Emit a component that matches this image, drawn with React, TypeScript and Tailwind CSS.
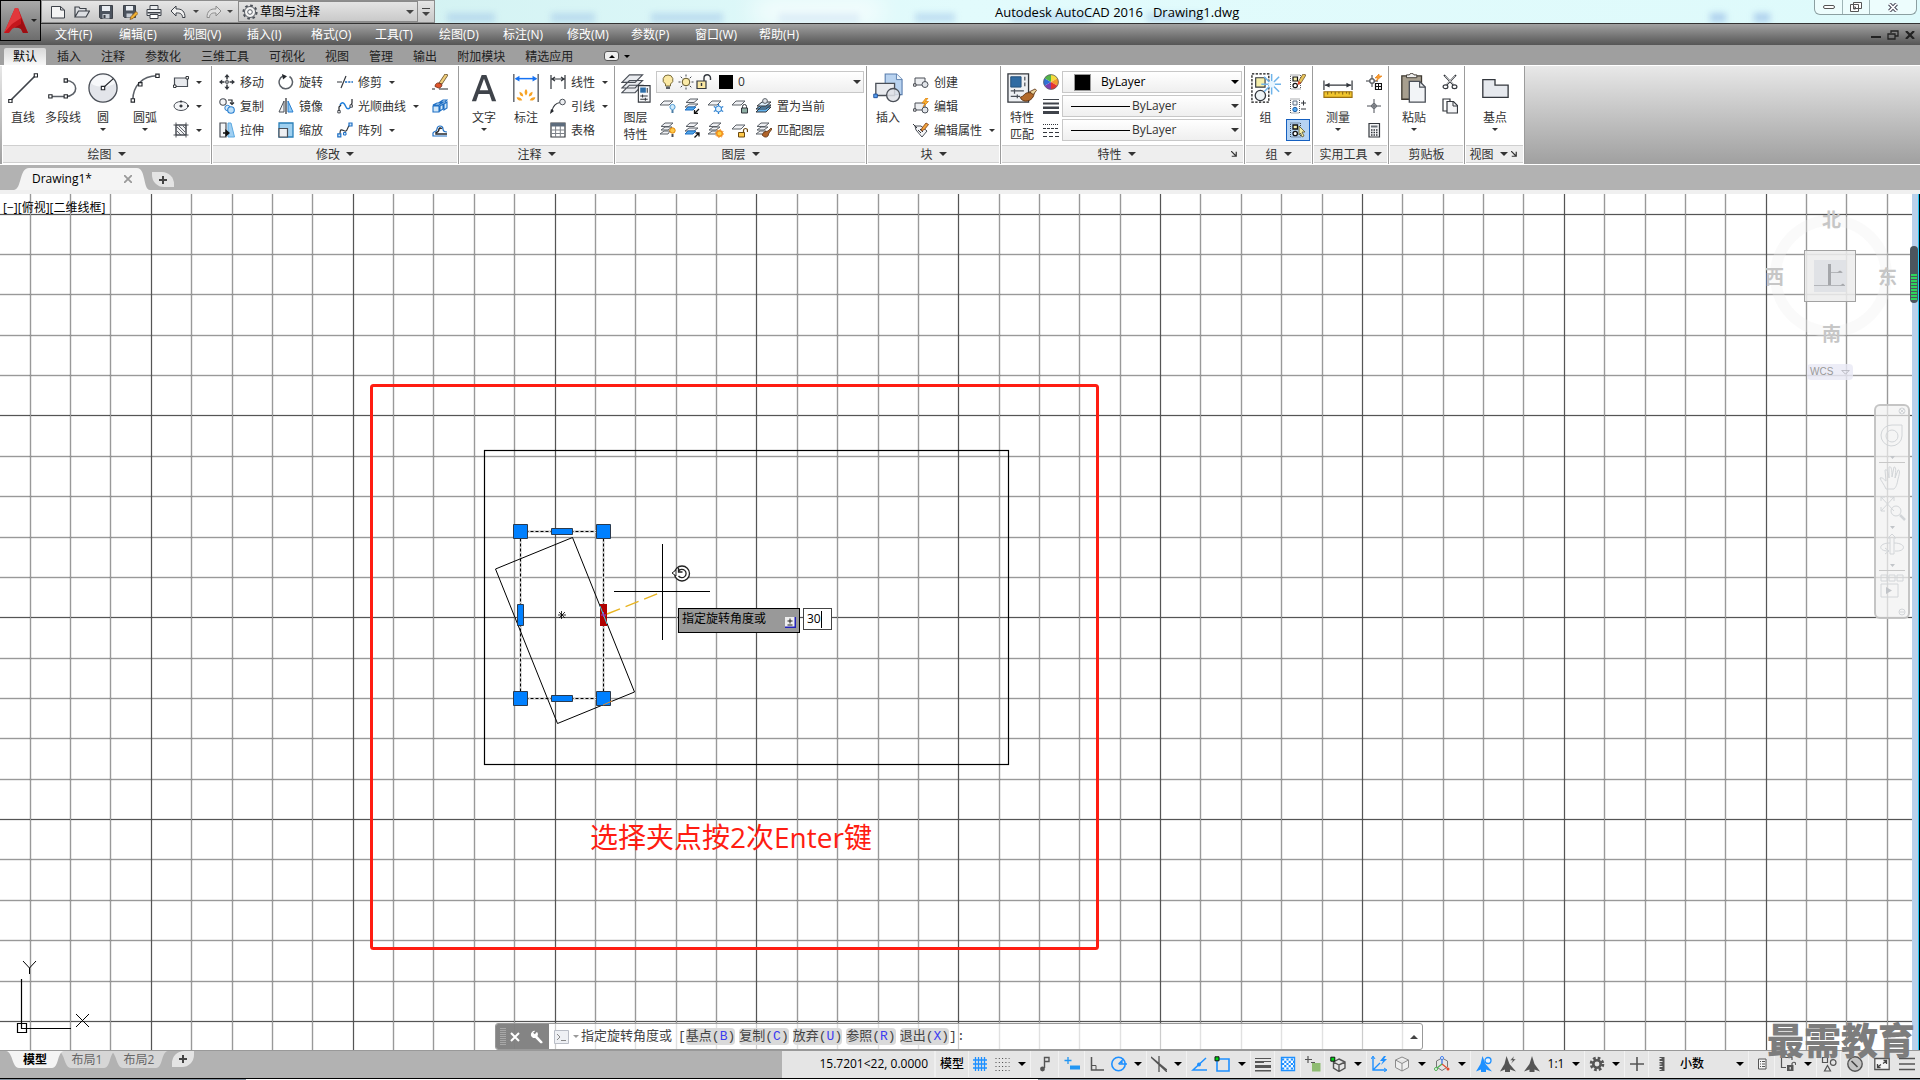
import type { ReactNode } from 'react';
import { clsx } from 'clsx';

const ICONS: Record<string, ReactNode> = {
  // quick access
  newFile: <path d="M1.5 2.5h9l4 3.5v8h-13zM10.5 2.5v3.5h4" fill="#f4f4f4" stroke="#3c4148" />,
  open: <path d="M1 13V3h4l1 1.5h6V7M1 13l3.5-6h11L12 13z" fill="#dcdee2" stroke="#3c4148" strokeWidth="1.2" />,
  save: (
    <>
      <path d="M1.5 1.5h13v13h-12l-1-1z" fill="#4b535e" stroke="#3c4148" />
      <path d="M4 2h8v5H4z" fill="#e9edf2" />
      <path d="M4.5 10h7v4.5h-7z" fill="#c6ccd4" />
      <path d="M5.5 11h2v3h-2z" fill="#3c4148" />
    </>
  ),
  saveAs: (
    <>
      <path d="M1.5 1.5h12v12h-11l-1-1z" fill="#4b535e" stroke="#3c4148" />
      <path d="M4 2h7v4.5H4z" fill="#e9edf2" />
      <path d="M4.5 9.5h6v4h-6z" fill="#c6ccd4" />
      <path d="M8 15.5l1-3 5-5 2 2-5 5z" fill="#f2b233" stroke="#7a4a12" strokeWidth=".7" />
    </>
  ),
  print: (
    <>
      <path d="M4 5V1.5h8V5M1 5.5h14v6H1z" fill="#eceef0" stroke="#3c4148" />
      <path d="M1.5 8h13v1.5h-13z" fill="#3c4148" />
      <path d="M4 10.5h8v4H4z" fill="#fff" stroke="#3c4148" />
    </>
  ),
  undo: <path d="M1 7l5-5v3c6-.5 9 2.5 9 8.5h-2.500C12.5 10 10 8.5 6 9v3z" fill="#f0f0f0" stroke="#3c4148" strokeLinejoin="round" />,
  redo: <path d="M15 7l-5-5v3c-6-.5-9 2.5-9 8.5h2.500C3.5 10 6 8.5 10 9v3z" fill="#e0e0e0" stroke="#8d8d8d" strokeLinejoin="round" />,
  gearOutline: (
    <>
      <circle cx="8" cy="8" r="6.6" fill="none" stroke="#4a4f57" strokeWidth="2" strokeDasharray="2.6 2.58" />
      <circle cx="8" cy="8" r="5.5" fill="#f2f2f2" stroke="#4a4f57" strokeWidth=".9" />
      <circle cx="8" cy="8" r="2.3" fill="#fff" stroke="#4a4f57" strokeWidth=".9" />
    </>
  ),
  // draw
  line: (
    <>
      <path d="M2 30L30 2" stroke="#3f434a" strokeWidth="1.6" />
      <path d="M.8 28.2h3.5v3.5H.8zM28 .8h3.5v3.5H28z" fill="#fff" stroke="#23262b" strokeWidth="1.2" />
    </>
  ),
  polyline: (
    <>
      <path d="M2 25h17c14 0 14-17 0-17" fill="none" stroke="#5c6168" strokeWidth="1.7" />
      <path d="M.8 23.2h3.5v3.5H.8zM17.2 23.2h3.5v3.5h-3.5zM17.2 6.2h3.5v3.5h-3.5z" fill="#fff" stroke="#23262b" strokeWidth="1.2" />
    </>
  ),
  circle: (
    <>
      <circle cx="16" cy="16" r="15" fill="#e3e5ea" stroke="#4a4f57" strokeWidth="1.4" />
      <path d="M3 11a14 14 0 0 1 26 0c-6 4-18 6-26 0z" fill="#f7f8fa" />
      <path d="M16 16L27 6" stroke="#23262b" strokeWidth="1.2" />
      <path d="M14.2 14.2h3.6v3.6h-3.6z" fill="#fff" stroke="#23262b" strokeWidth="1.2" />
    </>
  ),
  arc: (
    <>
      <path d="M3 29C3 14 13 3 29 3" fill="none" stroke="#5c6168" strokeWidth="1.7" />
      <path d="M1.2 27.5h3.6v3.6H1.200zM9.2 10.2h3.6v3.6H9.200zM27.5 1.2h3.6v3.6h-3.6z" fill="#fff" stroke="#23262b" strokeWidth="1.2" />
    </>
  ),
  rect: (
    <>
      <path d="M1.5 4h13v8.5h-13z" fill="#e8eaee" stroke="#4a4f57" strokeWidth="1.2" />
      <path d="M13 2.5h2.5V5H13zM.5 11H3v2.5H.5z" fill="#fff" stroke="#23262b" strokeWidth=".9" />
    </>
  ),
  ellipse: (
    <>
      <ellipse cx="8" cy="8" rx="7" ry="4.5" fill="#f4f5f7" stroke="#4a4f57" />
      <path d="M6.5 8h3M8 6.5v3M8 2.5v2M14 8h2" stroke="#23262b" strokeWidth="1.3" />
    </>
  ),
  hatch: (
    <>
      <path d="M3 3h10v10H3z" fill="#f0f1f3" stroke="#4a4f57" />
      <path d="M4 9l4 4M4 5l8 8M6 4l6 6M10 4l3 3" stroke="#55595f" strokeWidth=".9" />
      <path d="M3 .5v15M.5 13h15M.5 3h15M13 .5v15" stroke="#3f434a" strokeWidth=".9" />
    </>
  ),
  // modify
  move: (
    <>
      <path d="M8 0l2.6 3.2H5.4zM8 16l2.6-3.2H5.4zM0 8l3.2-2.6v5.2zM16 8l-3.2-2.6v5.2z" fill="#33373d" />
      <path d="M8 3v2.5M8 13v-2.5M3 8h2.5M13 8h-2.5" stroke="#33373d" strokeWidth="1.5" />
      <path d="M6.8 6.8h2.4v2.4H6.8z" fill="none" stroke="#33373d" />
    </>
  ),
  rotate: (
    <>
      <path d="M11.5 2.5A6.7 6.7 0 1 1 5 2" fill="none" stroke="#5b6067" strokeWidth="1.5" />
      <path d="M4 0l5 2.2L5 5.5z" fill="#23262b" />
    </>
  ),
  trim: (
    <>
      <path d="M0 8h5M9 2L4 14" stroke="#33373d" strokeWidth="1.2" />
      <path d="M8 8h8" stroke="#1e6fc4" strokeWidth="1.4" strokeDasharray="2.2 1" />
    </>
  ),
  erase: (
    <>
      <path d="M7 9L13 0l3 1-6 9z" fill="#f1cf7b" stroke="#5d4522" strokeWidth=".8" />
      <path d="M3 12.5C3 10 5 8.5 7 9l3 1.5c0 2-1.5 3.5-3.5 3.5z" fill="#e0562c" stroke="#6e2a15" strokeWidth=".8" />
      <path d="M0 15h3M7 15h9" stroke="#23262b" strokeWidth="1.2" />
    </>
  ),
  copy: (
    <>
      <circle cx="4" cy="4" r="3.2" fill="#f4f5f7" stroke="#4a4f57" strokeWidth="1.1" />
      <path d="M9 2h4v3M11 4.500l2 2 2-2" fill="none" stroke="#23262b" strokeWidth="1.2" />
      <circle cx="8.5" cy="10" r="2.7" fill="#d9ecfb" stroke="#2a7fd0" />
      <circle cx="12" cy="12" r="3.3" fill="#bfe0f8" stroke="#2a7fd0" strokeWidth="1.1" />
    </>
  ),
  mirror: (
    <>
      <path d="M6 3v11H1z" fill="#f4f5f7" stroke="#4a4f57" />
      <path d="M10 3v11h5z" fill="#8fcaf5" stroke="#2a7fd0" />
      <path d="M8 0v16" stroke="#23262b" strokeWidth="1.2" />
    </>
  ),
  blend: (
    <>
      <path d="M2 14V9l2-2M14 8l1-3V1" fill="none" stroke="#23262b" strokeWidth="1.2" />
      <path d="M3 7c3-5 5 0 6 2s3 3 5-1" fill="none" stroke="#1e7fdc" strokeWidth="1.5" />
      <path d="M.8 12.5h2.4v2.4H.8zM13 6.8h2.4v2.4H13z" fill="#fff" stroke="#33373d" strokeWidth=".9" />
    </>
  ),
  explode: (
    <path d="M1 7l4-2h5l-3 2zM1 8h6v6H1zM8 8l3-2v5l-3 2zM8 4l3-2h4l-2 2zM12 6l3-2v6l-3 2z" fill="#cfe6f9" stroke="#1e6fc4" strokeWidth="1.1" />
  ),
  stretch: (
    <>
      <path d="M1 1h6v14H1z" fill="#f4f5f7" stroke="#4a4f57" strokeWidth="1.2" />
      <path d="M9 1h3l3.5 14H9z" fill="#9fcff2" stroke="#5ba8e0" />
      <path d="M4 11h5M7 8.5l3 2.5-3 2.5z" stroke="#111" strokeWidth="1.3" fill="#111" />
    </>
  ),
  scale: (
    <>
      <path d="M1 1h14v14H1z" fill="#9fd0f0" stroke="#2a7fb8" strokeWidth="1.3" />
      <path d="M1 6.5h8.5V15H1z" fill="#eef0f3" stroke="#4a4f57" strokeWidth="1.2" />
    </>
  ),
  array: (
    <>
      <path d="M3 12c0-8 4-2 6-3s1-4 4-6" fill="none" stroke="#33373d" strokeWidth="1.2" />
      <path d="M.8 11.8h3v3h-3zM12 1h3v3h-3z" fill="#cfe6f9" stroke="#1e6fc4" strokeWidth="1.2" />
      <path d="M6.5 10.5H9V13H6.5z" fill="#cfe6f9" stroke="#1e6fc4" />
    </>
  ),
  offset: (
    <>
      <path d="M15 14H1v-3c1-2 4-1 4-4a3 3 0 0 1 6 0c0 2 1 3 4 3" fill="none" stroke="#1e6fc4" strokeWidth="1.2" />
      <path d="M15 12H4v-1.5c3-.5 3-2 3-3.5a1.3 1.3 0 0 1 2.5 0" fill="none" stroke="#23262b" strokeWidth="1.4" />
    </>
  ),
  // annotate
  textA: <path d="M3 30L13.5 2h5L29 30h-4.6l-2.600-7.5H10.2L7.6 30zM11.5 18.5h9L16 6z" fill="#3f434a" fillRule="evenodd" />,
  dimension: (
    <>
      <path d="M3 1v30M29 1v30" stroke="#5c6168" strokeWidth="1.5" />
      <path d="M5 6h22" stroke="#1672f3" strokeWidth="1.6" />
      <path d="M4 6l5-3v6zM28 6l-5-3v6z" fill="#1672f3" />
      <path d="M16 17c2 2 2 5 0 7-2-2-2-5 0-7zM9 20c3 1 4 2 4 5-3 0-4-2-4-5zM23 20c-3 1-4 2-4 5 3 0 4-2 4-5zM6 26c3-.5 5 1 6 3-3 1-5 0-6-3zM26 26c-3-.5-5 1-6 3 3 1 5 0 6-3z" fill="#f7a325" />
    </>
  ),
  linear: <path d="M1 1v14M15 1v14M2 5h12M5 3L2 5l3 2M11 3l3 2-3 2" fill="none" stroke="#33373d" strokeWidth="1.2" />,
  leader: (
    <>
      <path d="M2 13C3 8 6 5 10 4.5" fill="none" stroke="#33373d" strokeWidth="1.2" />
      <circle cx="12.5" cy="4" r="2.8" fill="#eceef1" stroke="#4a4f57" />
      <path d="M0 16l1-5 3 2z" fill="#23262b" />
    </>
  ),
  table: (
    <>
      <path d="M1 1h14v14H1z" fill="#fff" stroke="#33373d" strokeWidth="1.2" />
      <path d="M1 1h14v3.5H1z" fill="#5c6b7c" />
      <path d="M1 8h14M1 11.5h14M5.6 4v11M10.3 4v11" stroke="#7c8188" />
    </>
  ),
  // layers
  layerProps: (
    <>
      <path d="M1 21l8-8h14l-8 8zM1 16l8-8h14l-8 8zM1 10l8-8h14l-8 8z" fill="#e9ebef" stroke="#4a4f57" strokeWidth="1.2" />
      <path d="M18.5 13.5h12.500v17.500H18.5z" fill="#f7f8fa" stroke="#33373d" strokeWidth="1.2" />
      <path d="M20.5 15.5h6v5.5h-6z" fill="#2d6ea8" />
      <path d="M28 16v5M20.5 24.5h8M20.5 28h8M23 23v3M26 26.5v3" stroke="#33373d" strokeWidth="1.1" />
    </>
  ),
  bulb: (
    <>
      <path d="M8 1a4.8 4.8 0 0 1 2.5 9v2h-5v-2A4.8 4.8 0 0 1 8 1z" fill="#fbe9a4" stroke="#6b5c2a" strokeWidth=".9" />
      <path d="M6 12.5h4V15H6z" fill="#5b6067" />
    </>
  ),
  sun: (
    <>
      <circle cx="8" cy="8" r="3.8" fill="#fbeba8" stroke="#5f5326" />
      <path d="M8 .5v2M8 13.5v2M.5 8h2M13.5 8h2M2.7 2.7l1.5 1.5M11.8 11.8l1.5 1.5M13.3 2.7l-1.5 1.5M4.2 11.8l-1.5 1.5" stroke="#3f434a" />
    </>
  ),
  unlock: (
    <>
      <path d="M1 7h9v7.5H1z" fill="#fbe9a4" stroke="#33373d" strokeWidth="1.2" />
      <path d="M8 7V4a3 3 0 0 1 6.5 0v2" fill="none" stroke="#33373d" strokeWidth="1.4" />
      <path d="M5.5 9v3" stroke="#33373d" strokeWidth="1.4" />
    </>
  ),
  layerOff: (
    <>
      <path d="M0 7l4-4h9L9 7z" fill="#f0f1f4" stroke="#5b6067" />
      <circle cx="12.5" cy="9" r="2.6" fill="#cfe9fb" stroke="#4f9bd3" />
      <path d="M11.5 12h2v3h-2z" fill="#4d7ea6" />
    </>
  ),
  layerIso: (
    <>
      <path d="M1 9l4-3h9l-4 3zM2 4.5L6 1h8l-4 3.5z" fill="#f0f1f4" stroke="#5b6067" />
      <path d="M1 12l3-3h8l-3 3z" fill="#4fa6e8" stroke="#1e6fc4" />
      <path d="M15 11l-4 4M10.5 12v3.5H14" stroke="#111" strokeWidth="1.3" fill="none" />
    </>
  ),
  layerFreeze: (
    <>
      <path d="M0 7l4-4h9L9 7z" fill="#f0f1f4" stroke="#5b6067" />
      <path d="M10.5 6v10M5.8 8.5l9.4 5M15.2 8.5l-9.4 5" stroke="#2a7fd0" strokeWidth="1.3" />
      <circle cx="10.5" cy="11" r="3" fill="#e2f2fd" stroke="#2a7fd0" />
    </>
  ),
  layerLock: (
    <>
      <path d="M0 7l4-4h9L9 7z" fill="#f0f1f4" stroke="#5b6067" />
      <path d="M9.5 10h6v5h-6z" fill="#8fb0a5" stroke="#33373d" />
      <path d="M10.5 10V8.5a2 2 0 0 1 4 0V10" fill="none" stroke="#33373d" />
    </>
  ),
  layerCurrent: (
    <>
      <path d="M0 14l5-5h10l-5 5zM0 11l5-4h10l-5 4z" fill="#65b4ee" stroke="#33373d" />
      <path d="M1 8l5-4h9l-5 4z" fill="#dceefb" stroke="#33373d" />
      <circle cx="9" cy="3" r="2.4" fill="#dfe3e8" stroke="#5b6067" />
    </>
  ),
  layerOn: (
    <>
      <path d="M0 12l4-3h6l-2 3zM1 8l4-3h7L8 8zM1 4.5L5 1h8L9 4.5z" fill="#f0f1f4" stroke="#5b6067" />
      <circle cx="12.5" cy="8.5" r="2.7" fill="#ffc94a" stroke="#e2880b" />
      <path d="M11.5 12h2v3h-2z" fill="#4a4f57" />
    </>
  ),
  layerUniso: (
    <>
      <path d="M1 9l4-3h9l-4 3zM2 4.5L6 1h8l-4 3.5z" fill="#f0f1f4" stroke="#5b6067" />
      <path d="M1 12l3-3h8l-3 3z" fill="#4fa6e8" stroke="#1e6fc4" />
      <path d="M10.5 15.5l4-4M11.5 11H15v3.5" stroke="#111" strokeWidth="1.3" fill="none" />
    </>
  ),
  layerThaw: (
    <>
      <path d="M0 12l4-3h6l-2 3zM1 8l4-3h7L8 8zM1 4.5L5 1h8L9 4.5z" fill="#f0f1f4" stroke="#5b6067" />
      <circle cx="11.5" cy="11.5" r="2.8" fill="#ffcf3d" stroke="#f08b1a" strokeWidth="1.4" />
      <circle cx="11.5" cy="11.5" r="4" fill="none" stroke="#f08b1a" strokeDasharray="1.2 1.9" />
    </>
  ),
  layerUnlock: (
    <>
      <path d="M0 7l4-4h9L9 7z" fill="#f0f1f4" stroke="#5b6067" />
      <path d="M6.5 10.5h6V15h-6z" fill="#ffc94a" stroke="#6b4a12" />
      <path d="M11.5 10.5V8.5a2 2 0 0 1 4 0V10" fill="none" stroke="#6b4a12" strokeWidth="1.2" />
    </>
  ),
  layerMatch: (
    <>
      <path d="M0 12l4-3h6l-2 3zM1 8l4-3h7L8 8zM1 4.5L5 1h8L9 4.5z" fill="#f0f1f4" stroke="#5b6067" />
      <path d="M8 10l4-1 3-3 1 1-3 4-1 3c-2 2-4 1-6-1z" fill="#b0642a" stroke="#5c3212" strokeWidth=".8" />
    </>
  ),
  // block
  insert: (
    <>
      <path d="M13 1h12l6 6v16H13z" fill="#b9d3f0" stroke="#5b7fae" strokeWidth="1.2" />
      <path d="M25 1v6h6" fill="#eef5fc" stroke="#5b7fae" />
      <path d="M3 11h20v13H3z" fill="#e9ebef" stroke="#4a4f57" strokeWidth="1.4" />
      <circle cx="21.5" cy="23.5" r="7" fill="#dfe2e7" fillOpacity=".85" stroke="#4a4f57" strokeWidth="1.4" />
      <path d="M.8 22.5h3.8v3.8H.8z" fill="#5aa0ee" stroke="#1d4f9c" />
    </>
  ),
  blockCreate: (
    <>
      <path d="M2 4h10v7H2z" fill="#eceef1" stroke="#4a4f57" />
      <circle cx="12" cy="10.5" r="3" fill="#e2e5ea" stroke="#4a4f57" />
      <path d="M.6 9.8h2.4v2.4H.6z" fill="#fff" stroke="#33373d" strokeWidth=".9" />
    </>
  ),
  blockEdit: (
    <>
      <path d="M2 5h10v7H2z" fill="#eceef1" stroke="#4a4f57" />
      <circle cx="12" cy="12" r="3" fill="#e2e5ea" stroke="#4a4f57" />
      <path d="M.6 10.8h2.4v2.4H.6z" fill="#fff" stroke="#33373d" strokeWidth=".9" />
      <path d="M13 0L9 5h3l-2 4 5.5-5.5h-3L15 0z" fill="#ffb52e" stroke="#d67a0a" strokeWidth=".7" />
    </>
  ),
  blockAttr: (
    <>
      <path d="M2 4h6l6 5-5 6-6-7z" fill="#f4f5f7" stroke="#4a4f57" />
      <path d="M0 2l4 4M5 8l3 3M7 7l3 3" stroke="#33373d" />
      <path d="M8 9l1-3 4-5 2.5 1.5-4 5z" fill="#f2a33c" stroke="#7a3812" strokeWidth=".8" />
    </>
  ),
  // properties
  matchProps: (
    <>
      <path d="M1 1h22v30H1z" fill="#eef0f3" stroke="#33373d" strokeWidth="1.4" />
      <path d="M4 4h11v11H4z" fill="#2f6ba3" stroke="#234f78" />
      <path d="M19 4v4M19 10v4M4 19h14M8 17v5M4 25h10M11 23v4" stroke="#4a4f57" strokeWidth="1.3" />
      <path d="M14 26c4-1 5-5 8-5l7 0c0 4-3 9-9 9-3 0-5-2-6-4z" fill="#b36a2b" stroke="#5c3212" />
      <path d="M24 20l6-3 1.5 1.5L28 23z" fill="#ead39b" stroke="#5c3212" strokeWidth=".9" />
    </>
  ),
  wheel: (
    <>
      <path d="M8 8V.5A7.5 7.5 0 0 1 14.5 4.2z" fill="#f6dc3c" />
      <path d="M8 8l6.5-3.8a7.5 7.5 0 0 1 0 7.6z" fill="#f39a2c" />
      <path d="M8 8l6.5 3.8A7.5 7.5 0 0 1 8 15.5z" fill="#e5342e" />
      <path d="M8 8v7.5a7.5 7.5 0 0 1-6.5-3.7z" fill="#7d3fb0" />
      <path d="M8 8l-6.5 3.8a7.5 7.5 0 0 1 0-7.6z" fill="#2f6fd6" />
      <path d="M8 8L1.5 4.2A7.5 7.5 0 0 1 8 .5z" fill="#53b548" />
      <circle cx="8" cy="8" r="7.4" fill="none" stroke="#5b6067" strokeWidth=".8" />
    </>
  ),
  lineweight: <path d="M0 1h16v1H0zM0 4.5h16v2H0zM0 8.5h16v2.5H0zM0 13h16v3H0z" fill="#3f434a" />,
  linetype: (
    <>
      <path d="M0 2.5h16" stroke="#33373d" strokeDasharray="1 1" />
      <path d="M0 6.5h16" stroke="#33373d" strokeDasharray="3 1" />
      <path d="M0 10.5h16M0 14.5h16" stroke="#33373d" strokeDasharray="4 2" />
    </>
  ),
  // groups
  group: (
    <>
      <path d="M1 1h18v30H1z" fill="none" stroke="#111" strokeWidth="1.3" strokeDasharray="2.5 1.5" />
      <path d="M5 5h10v10H5z" fill="#f5efab" stroke="#33373d" strokeWidth="1.2" />
      <circle cx="10" cy="24" r="5.5" fill="#eef3f5" stroke="#33373d" strokeWidth="1.4" />
      <path d="M22 1v22M11 12h21M14 4l16 16M30 4L14 20" stroke="#6fb4ea" strokeWidth="1.6" />
      <circle cx="22" cy="12" r="3.5" fill="#e6f5ff" />
    </>
  ),
  ungroup: (
    <>
      <path d="M.5 1h10v14H.5z" fill="none" stroke="#55595f" strokeDasharray="1 1" />
      <path d="M3 3h4.5v4H3z" fill="#f5efab" stroke="#111" strokeWidth="1.2" />
      <circle cx="5.2" cy="11.5" r="2.2" fill="#fff" stroke="#111" strokeWidth="1.2" />
      <path d="M8 8l5-8 3 1-5 8z" fill="#e8c45a" stroke="#5d4522" strokeWidth=".7" />
      <path d="M7.5 10l1-3 2.5 1.5L9 11z" fill="#d9472a" />
    </>
  ),
  groupEdit: (
    <>
      <path d="M.5 1h9v14h-9z" fill="none" stroke="#55595f" strokeDasharray="1 1" />
      <path d="M3 3h4v4H3z" fill="#f0f4f8" stroke="#5b6f85" />
      <circle cx="5" cy="11.5" r="2.2" fill="#4fa6f0" stroke="#1e5fa4" />
      <path d="M11 5h5M13.5 2.5v5M11 11h5" stroke="#33373d" />
    </>
  ),
  groupSelect: (
    <>
      <path d="M.5 1h10v14H.5z" fill="none" stroke="#3c4a5c" strokeDasharray="1 1" />
      <path d="M3 3h4.5v4H3z" fill="#f5efab" stroke="#111" strokeWidth="1.3" />
      <circle cx="5.2" cy="11.5" r="2.2" fill="#fff" stroke="#111" strokeWidth="1.3" />
      <path d="M9 4l6 6h-3l2 4-2 1-1.5-4L9 13z" fill="#f5efab" stroke="#5b5326" strokeWidth=".8" />
    </>
  ),
  // utilities
  measure: (
    <>
      <path d="M1 8v10M31 8v10M2 13h28" stroke="#33373d" strokeWidth="1.3" />
      <path d="M2 13l5-2.5v5zM30 13l-5-2.5v5z" fill="#33373d" />
      <path d="M1 20h30v6H1z" fill="#f0c52e" stroke="#9a6f10" strokeWidth="1.2" />
      <path d="M5 20v3M9 20v2M13 20v3M17 20v2M21 20v3M25 20v2M28 20v3" stroke="#7b5a10" />
    </>
  ),
  quickSelect: (
    <>
      <path d="M6 1v12M0 7h12" stroke="#33373d" />
      <path d="M4 5h4v4H4z" fill="#fff" stroke="#33373d" />
      <path d="M13 0L9 4h3l-2 3 6-5h-3z" fill="#ff9d2e" stroke="#e0780a" strokeWidth=".6" />
      <path d="M9.5 9.5h6v6h-6z" fill="#fff" stroke="#111" strokeWidth="1.2" />
      <path d="M9.5 12.5h6M12.5 9.5v6" stroke="#111" />
    </>
  ),
  idPoint: (
    <>
      <path d="M8 1v14M1 8h14" stroke="#4a4f57" />
      <circle cx="8" cy="8" r="2.3" fill="none" stroke="#4a4f57" />
    </>
  ),
  calc: (
    <>
      <path d="M3 1.5h10.5v13.5H3z" fill="#f4f5f7" stroke="#33373d" strokeWidth="1.2" />
      <path d="M5 3.5h6.5v2H5z" fill="#6b7077" />
      <path d="M5 8h7M5 10.5h7M5 13h7" stroke="#33373d" strokeWidth="1.3" strokeDasharray="1.5 1" />
    </>
  ),
  // clipboard
  paste: (
    <>
      <path d="M3 3h21v25H3z" fill="#a79f8f" stroke="#3f3a32" strokeWidth="1.4" />
      <path d="M8 5V2h3c0-2 5-2 5 0h3v3z" fill="#f0f0f0" stroke="#3f3a32" />
      <path d="M11 9h11l6 6v16H11z" fill="#f2f4f7" stroke="#4a4f57" strokeWidth="1.4" />
      <path d="M22 9v6h6" fill="none" stroke="#4a4f57" strokeWidth="1.2" />
    </>
  ),
  cut: (
    <>
      <path d="M2 1l9.500 10M14 1L4.500 11" stroke="#33373d" strokeWidth="1.8" />
      <path d="M3 2l9 9M13 2l-9 9" stroke="#e8e8e8" strokeWidth=".7" />
      <ellipse cx="3.5" cy="12.8" rx="2.4" ry="1.9" fill="#fff" stroke="#33373d" strokeWidth="1.2" />
      <ellipse cx="12.5" cy="12.8" rx="2.4" ry="1.9" fill="#fff" stroke="#33373d" strokeWidth="1.2" />
    </>
  ),
  copyClip: (
    <>
      <path d="M5 13H1V1h7v2" fill="none" stroke="#33373d" strokeWidth="1.2" />
      <path d="M5 3.5h6.5l4 4V15H5z" fill="#f4f5f7" stroke="#33373d" strokeWidth="1.2" />
      <path d="M11 4v4h4" fill="none" stroke="#33373d" />
    </>
  ),
  base: <path d="M3 7h13v6h14v13H3z" fill="#e6e9ee" stroke="#33373d" strokeWidth="1.4" />,
  // status bar
  grid: <path d="M3.5 1v14M6.500 1v14M9.5 1v14M12.5 1v14M1 4h14M1 8h14M1 12h14" stroke="#1e90ff" strokeWidth="1.3" />,
  snap: <path d="M1.5 2.5h14M1.5 6.5h14M1.5 10.5h14M1.5 14.5h14" stroke="#444" strokeWidth="1.2" strokeDasharray="1 2.3" />,
  infer: (
    <>
      <path d="M7.5 12V1.5H12v4H7.5" fill="none" stroke="#555" strokeWidth="1.4" />
      <circle cx="5.5" cy="13" r="2.4" fill="#555" />
    </>
  ),
  dynInput: (
    <>
      <path d="M4 1v7M.5 4.5h7" stroke="#2196f3" strokeWidth="1.3" />
      <path d="M6 9.5h10v4H6z" fill="#2196f3" />
    </>
  ),
  ortho: (
    <>
      <path d="M2.5 1v13H15" fill="none" stroke="#555" strokeWidth="1.5" />
      <path d="M2.5 9.5H7V14" fill="none" stroke="#555" />
    </>
  ),
  polar: (
    <>
      <circle cx="7.5" cy="8" r="6.7" fill="none" stroke="#1e90ff" strokeWidth="1.6" />
      <path d="M7.5 8l5-5M7.5 8H16M11 4.5V8" stroke="#1e90ff" strokeWidth="1.3" />
    </>
  ),
  iso: <path d="M8 0v16M0 1l16 13M0 1l16 15" stroke="#555" strokeWidth="1.3" />,
  otrack: (
    <>
      <path d="M15 2L2 14h14" fill="none" stroke="#1e90ff" strokeWidth="1.5" />
      <circle cx="8" cy="8.5" r="2" fill="#1e90ff" />
    </>
  ),
  osnap: (
    <>
      <path d="M3 3h12v12H3z" fill="none" stroke="#1e90ff" strokeWidth="1.6" />
      <path d="M1 .8h4v4H1z" fill="#00d414" stroke="#111" />
    </>
  ),
  lwt: <path d="M0 2h16v1H0zM0 5h9v2H0zM9 5h7v1H9zM0 9h16v3H0zM0 14h16v1.500H0z" fill="#555" />,
  transparency: (
    <>
      <path d="M1.5 1.5h13v13h-13z" fill="#fff" stroke="#1e90ff" strokeWidth="1.4" />
      <path d="M2 3.5h12M2 8h12M2 12.5h12" stroke="#1e90ff" strokeWidth="2.2" strokeDasharray="2.2 2.2" />
      <path d="M4.2 5.8h10M4.2 10.2h10" stroke="#1e90ff" strokeWidth="2.2" strokeDasharray="2.2 2.2" />
    </>
  ),
  cycling: (
    <>
      <path d="M3 0v7M0 3.5h7M6 6.5h4" stroke="#555" strokeWidth="1.2" />
      <path d="M7 7h8.5v8.5H7z" fill="#8fbc72" />
    </>
  ),
  osnap3d: (
    <>
      <path d="M9 3l6 3v6l-6 3.5L3.5 12V6zM3.5 6L9 9l6-3M9 9v6" fill="none" stroke="#555" strokeWidth="1.4" />
      <path d="M.8 1.2h4v4h-4z" fill="#00d414" stroke="#111" />
    </>
  ),
  ducs: (
    <>
      <path d="M2 1v13h13M2 14L9 7" fill="none" stroke="#1e90ff" strokeWidth="1.4" />
      <path d="M0 3l2-3 2 3M13 12l3 2-3 2" fill="none" stroke="#1e90ff" />
      <path d="M13 0l-4 5h3l-2 4 6-6h-3l2-3z" fill="#1e90ff" />
    </>
  ),
  cube: <path d="M8 1l6.5 3v7.5L8 15l-6.500-3.5V4zM1.5 4L8 7.5 14.5 4M8 7.5V15" fill="#eee" stroke="#8b8b8b" />,
  gizmo: (
    <>
      <path d="M8 2l5.5 3v6L8 14.5 2.5 11V5z" fill="none" stroke="#777" />
      <path d="M8 8V3" stroke="#3b78e7" strokeWidth="1.3" />
      <path d="M8 8l5 4" stroke="#e54b2e" strokeWidth="1.3" />
      <path d="M8 8l-5 4" stroke="#4caf50" strokeWidth="1.3" />
      <circle cx="8" cy="2" r="1.5" fill="#fff" stroke="#3b78e7" />
      <circle cx="14" cy="13" r="1.5" fill="#e54b2e" />
      <circle cx="2" cy="13" r="1.5" fill="#fff" stroke="#4caf50" />
    </>
  ),
  annoVis: (
    <>
      <path d="M6.5 0L9.5 8l6.5 7.5-6-2V16H5v-2.500l-5 2L4.500 8z" fill="#1e90ff" />
      <circle cx="12" cy="4.5" r="3" fill="#e5f2ff" stroke="#1e90ff" strokeWidth="1.3" />
    </>
  ),
  annoAuto: (
    <>
      <path d="M6.5 0L9.500 8l6.5 7.5-6-2V16H5v-2.500l-5 2L4.500 8z" fill="#555" />
      <path d="M14 0l-4 4.5h2.5L11 8l5-5h-2.5z" fill="#555" stroke="#e5e5e5" strokeWidth=".5" />
    </>
  ),
  anno: <path d="M8 0l2.500 8 5.500 7.5-5.500-2V16h-5v-2.500L0 15.5 5.500 8z" fill="#555" />,
  gear: (
    <>
      <circle cx="8" cy="8" r="5.8" fill="none" stroke="#555" strokeWidth="3" strokeDasharray="2.6 1.95" />
      <circle cx="8" cy="8" r="3.7" fill="#e5e5e5" stroke="#555" strokeWidth="2.6" />
    </>
  ),
  plus: <path d="M8 1v14M1 8h14" stroke="#555" strokeWidth="1.6" />,
  ruler: <path d="M5.5 1h5v14h-5v-1h2v-1h-2v-2h3v-1h-3V8.5h2v-1h-2V6h3V5h-3V3h2V2h-2z" fill="#555" />,
  quickProps: (
    <>
      <path d="M4.5 3h7.5v10H4.5z" fill="#f4f4f4" stroke="#555" />
      <path d="M6 5.5h1M8 5.5h3M6 8h1M8 8h3M6 10.5h1M8 10.5h3" stroke="#555" />
    </>
  ),
  lockUi: (
    <>
      <path d="M12 4V1.5H1.5v10H6" fill="none" stroke="#555" strokeWidth="1.2" />
      <path d="M7 9h6.5v6H7z" fill="#555" />
      <path d="M12 9V7.5a2 2 0 0 1 3.7 0V9" fill="none" stroke="#555" strokeWidth="1.2" />
      <path d="M10.2 11v2.5" stroke="#fff" />
    </>
  ),
  isolate: <path d="M1.5 1.5h5v5h-5zM15 6.5a2.8 2.8 0 1 0-5.600 0 2.8 2.8 0 0 0 5.600 0zM3.5 15h6l-3-5.5z" fill="none" stroke="#555" strokeWidth="1.2" />,
  hardware: (
    <>
      <circle cx="8" cy="8" r="7.2" fill="#c3c3c3" stroke="#555" strokeWidth="1.4" />
      <path d="M4.5 5l6 6" stroke="#444" strokeWidth="1.6" />
    </>
  ),
  clean: (
    <>
      <path d="M.8 2.5h14.4v11H.8z" fill="#f4f4f4" stroke="#555" strokeWidth="1.3" />
      <path d="M9 7.5L12.5 5M12.5 8V4.5H9.5M7 8.5L3.5 11M3.5 8v3.5h3" fill="none" stroke="#444" strokeWidth="1.3" />
    </>
  ),
  menu: <path d="M0 2.5h16M0 8h16M0 13.5h16" stroke="#555" strokeWidth="1.7" />,
};

function Icon({ name, large = false }: { name: string; large?: boolean }) {
  return (
    <svg
      aria-hidden="true"
      viewBox={large ? '0 0 32 32' : '0 0 16 16'}
      className={clsx('shrink-0', large ? 'h-[30px] w-[30px]' : 'h-4 w-4')}
    >
      {ICONS[name]}
    </svg>
  );
}

function Caret({ big = false, up = false, className }: { big?: boolean; up?: boolean; className?: string }) {
  return (
    <svg
      aria-hidden="true"
      viewBox="0 0 8 4"
      className={clsx('shrink-0 fill-current', big ? 'h-1 w-2' : 'h-[3px] w-[6px]', up && 'rotate-180', className)}
    >
      <path d="M0 0h8L4 4z" />
    </svg>
  );
}

function BigTool({ icon, lines, caret, className }: { icon: string; lines: string[]; caret?: boolean; className: string }) {
  return (
    <button className={clsx('flex shrink-0 flex-col items-center pt-[3px] leading-[17px]', className)}>
      <Icon name={icon} large />
      <span className="mt-[6px] flex flex-col">
        {lines.map((l) => <span key={l}>{l}</span>)}
      </span>
      {caret && <Caret className="mt-[2px]" />}
    </button>
  );
}

function Tool({ icon, label, caret }: { icon: string; label?: string; caret?: boolean }) {
  return (
    <button aria-label={label ?? icon} className="flex h-6 items-center whitespace-nowrap">
      <Icon name={icon} />
      {label && <span className="ml-[5px] pt-px">{label}</span>}
      {caret && <Caret className="ml-[7px]" />}
    </button>
  );
}

function Panel({ title, className, caret = true, launcher, children }: {
  title: string; className: string; caret?: boolean; launcher?: boolean; children: ReactNode;
}) {
  return (
    <section className={clsx('flex shrink-0 flex-col border-r border-[#9c9c9c] bg-white', className)}>
      <div className="flex h-[79px] pt-1">{children}</div>
      <div className="mx-px flex h-[18px] items-center border-y border-[#cfcfcf] bg-[#eeeeee]">
        <button className="flex flex-1 items-center justify-center whitespace-nowrap">
          <span className="pt-px">{title}</span>
          {caret && <Caret big className="ml-[6px]" />}
        </button>
        {launcher && (
          <button aria-label={`${title}设置`} className="w-3">
            <svg viewBox="0 0 8 8" className="h-[6px] w-[6px]">
              <path d="M0 0l6 6M7 1v6H1" fill="none" stroke="#333" strokeWidth="1.6" />
            </svg>
          </button>
        )}
      </div>
    </section>
  );
}

function PropertyCombo({ label, swatch }: { label: string; swatch?: boolean }) {
  return (
    <label className={clsx('flex h-[22px] items-center border border-[#c8c8c8] bg-linear-to-b from-white to-[#efefef] pr-[2px]', swatch && 'text-black')}>
      {swatch
        ? <span className="ml-3 mr-[11px] h-[15px] w-[15px] bg-black outline outline-[#999]" />
        : <span className="ml-2 mr-[2px] h-px w-[59px] bg-black" />}
      <select aria-label={label} className="min-w-0 flex-1 appearance-none outline-none">
        <option>ByLayer</option>
      </select>
      <Caret big />
    </label>
  );
}

const MENUS = [
  '文件(F)', '编辑(E)', '视图(V)', '插入(I)', '格式(O)', '工具(T)',
  '绘图(D)', '标注(N)', '修改(M)', '参数(P)', '窗口(W)', '帮助(H)',
];

const RIBBON_TABS = ['插入', '注释', '参数化', '三维工具', '可视化', '视图', '管理', '输出', '附加模块', '精选应用'];

function TitleBar() {
  return (
    <div className="flex h-6 border-b border-[#333] bg-linear-to-r from-[#c9ecec] via-[#e2fbfc] to-[#defafb] pl-[41px]">
      <div className="flex h-[23px] items-center border border-[#8d8d8d] bg-linear-to-b from-[#e6e6e6] to-[#c8c8c8] text-[#444]">
        <div className="flex items-center gap-2 pl-2">
          {['newFile', 'open', 'save', 'saveAs', 'print', 'undo'].map((n) => (
            <button key={n} aria-label={n}><Icon name={n} /></button>
          ))}
        </div>
        <button aria-label="放弃列表" className="flex w-5 justify-center"><Caret /></button>
        <button aria-label="redo"><Icon name="redo" /></button>
        <button aria-label="重做列表" className="flex w-4 justify-center"><Caret /></button>
        <label className="flex h-[21px] w-[180px] items-center border border-[#8a8a8a] px-[3px]">
          <Icon name="gearOutline" />
          <select aria-label="工作空间" className="ml-[2px] min-w-0 flex-1 appearance-none pt-px text-black outline-none">
            <option>草图与注释</option>
          </select>
          <Caret big />
        </label>
        <button aria-label="自定义快速访问工具栏" className="flex w-4 flex-col items-center gap-[3px]">
          <span className="h-px w-2 bg-[#444]" />
          <Caret big />
        </button>
      </div>
      <div className="relative flex-1 overflow-hidden">
        <div aria-hidden="true" className="absolute inset-x-0 top-[13px] flex h-[9px] gap-14 pl-3 blur-[3px]">
          {['w-12', 'w-11', 'w-[72px]', 'w-20', 'w-10', 'w-20', 'w-14'].map((w, i) => (
            <span key={i} className={clsx('shrink-0 bg-[#8fb6e4]/40', w)} />
          ))}
          <span className="ml-auto w-4 bg-[#8fb6e4]/60" />
          <span className="-ml-7 mr-11 w-4 bg-[#8fb6e4]/60" />
        </div>
        <div className="absolute inset-y-0 left-[51%] w-32 -translate-x-96 bg-white/80 blur-md" />
      </div>
      <h1 className="absolute inset-x-0 top-0 ml-[995px] flex h-6 w-max items-center gap-[10px] text-[13px] text-black">
        <span>Autodesk AutoCAD 2016</span>
        <span>Drawing1.dwg</span>
      </h1>
      <div className="mr-[3px] flex h-[15px] divide-x divide-[#9fb4b6] rounded-b-md border border-t-0 border-[#8b9fa1] bg-[#edfdfd]">
        <button aria-label="最小化" className="flex w-7 items-center justify-center">
          <span className="h-1 w-3 rounded-xs border border-[#555] bg-white" />
        </button>
        <button aria-label="还原" className="flex w-[27px] items-center justify-center">
          <svg viewBox="0 0 12 10" className="h-[10px] w-3" fill="#fff" stroke="#555">
            <path d="M3.5.5h8v6h-8zM.5 2.5h8v7h-8zM3.5 5h2v2h-2z" />
          </svg>
        </button>
        <button aria-label="关闭" className="flex w-[46px] items-center justify-center">
          <svg viewBox="0 0 12 10" className="h-[9px] w-3" fill="none">
            <path d="M2 1l8 8M10 1L2 9" stroke="#445" strokeWidth="4" />
            <path d="M2 1l8 8M10 1L2 9" stroke="#fff" strokeWidth="1.8" />
          </svg>
        </button>
      </div>
    </div>
  );
}

function MenuBar() {
  return (
    <div className="flex h-[21px] items-center bg-linear-to-b from-[#a2a2a2] to-[#565656] pl-[55px] text-white">
      <nav className="flex">
        {MENUS.map((m) => <button key={m} className="min-w-16 text-left whitespace-nowrap">{m}</button>)}
      </nav>
      <div className="ml-auto mr-[5px] flex items-center gap-[6px] text-[#222]">
        <button aria-label="最小化图形" className="pt-1"><span className="block h-[2px] w-[10px] bg-[#222]" /></button>
        <button aria-label="还原图形">
          <svg viewBox="0 0 12 10" className="h-[10px] w-3" fill="none" stroke="#222" strokeWidth="1.3">
            <path d="M4 3V1h7v5H8M1 4h7v5H1z" />
          </svg>
        </button>
        <button aria-label="关闭图形">
          <svg viewBox="0 0 10 8" className="h-2 w-[10px]" stroke="#222" strokeWidth="2.2">
            <path d="M1 0l8 8M9 0L1 8" />
          </svg>
        </button>
      </div>
    </div>
  );
}

function RibbonTabs() {
  return (
    <nav className="flex h-5 items-end bg-[#9f9f9f] pl-1 text-black">
      <button className="h-[17px] w-[42px] rounded-t-xs bg-linear-to-b from-[#d8d8d8] to-[#f8f8f8] leading-[18px]">默认</button>
      <div className="ml-[11px] flex h-[17px] gap-5 leading-[18px] text-[#222]">
        {RIBBON_TABS.map((t) => <button key={t} className="whitespace-nowrap">{t}</button>)}
      </div>
      <button aria-label="最小化功能区" className="mb-1 ml-[31px] flex items-center gap-[5px]">
        <span className="flex h-[10px] w-[15px] items-center justify-center rounded-[3px] border border-[#555] bg-[#eee]">
          <Caret up />
        </span>
        <Caret />
      </button>
    </nav>
  );
}

const LAYER_ROWS = [
  { icons: ['layerOff', 'layerIso', 'layerFreeze', 'layerLock', 'layerCurrent'], label: '置为当前' },
  { icons: ['layerOn', 'layerUniso', 'layerThaw', 'layerUnlock', 'layerMatch'], label: '匹配图层' },
];

function Ribbon() {
  return (
    <div className="flex h-[100px] border-y border-white bg-linear-to-b from-[#e8e8e8] to-[#a0a0a0] pl-[2px] text-[#333]">
      <Panel title="绘图" className="w-[210px]">
        <BigTool icon="line" lines={['直线']} className="ml-px w-10" />
        <BigTool icon="polyline" lines={['多段线']} className="w-10" />
        <BigTool icon="circle" lines={['圆']} caret className="w-10" />
        <BigTool icon="arc" lines={['圆弧']} caret className="w-11" />
        <div className="ml-[6px]">
          <Tool icon="rect" caret />
          <Tool icon="ellipse" caret />
          <Tool icon="hatch" caret />
        </div>
      </Panel>
      <Panel title="修改" className="w-[247px]">
        <div className="grid auto-rows-[24px] grid-cols-[59px_59px_95px_16px] content-start pl-[7px]">
          <Tool icon="move" label="移动" />
          <Tool icon="rotate" label="旋转" />
          <Tool icon="trim" label="修剪" caret />
          <Tool icon="erase" />
          <Tool icon="copy" label="复制" />
          <Tool icon="mirror" label="镜像" />
          <Tool icon="blend" label="光顺曲线" caret />
          <Tool icon="explode" />
          <Tool icon="stretch" label="拉伸" />
          <Tool icon="scale" label="缩放" />
          <Tool icon="array" label="阵列" caret />
          <Tool icon="offset" />
        </div>
      </Panel>
      <Panel title="注释" className="w-[156px]">
        <BigTool icon="textA" lines={['文字']} caret className="ml-1 w-[42px]" />
        <BigTool icon="dimension" lines={['标注']} className="w-[42px]" />
        <div className="ml-[3px]">
          <Tool icon="linear" label="线性" caret />
          <Tool icon="leader" label="引线" caret />
          <Tool icon="table" label="表格" />
        </div>
      </Panel>
      <Panel title="图层" className="w-[252px]">
        <BigTool icon="layerProps" lines={['图层', '特性']} className="w-[41px]" />
        <div className="flex w-[208px] flex-col pt-px">
          <label className="mb-px flex h-[22px] items-center gap-[2px] border border-[#c8c8c8] bg-linear-to-b from-white to-[#efefef] pl-[3px] pr-[2px]">
            <Icon name="bulb" />
            <Icon name="sun" />
            <Icon name="unlock" />
            <span className="ml-[5px] h-[14px] w-[14px] bg-black" />
            <select aria-label="图层" className="ml-[3px] min-w-0 flex-1 appearance-none outline-none">
              <option>0</option>
            </select>
            <Caret big />
          </label>
          {LAYER_ROWS.map((row) => (
            <div key={row.label} className="flex h-6 items-center">
              {row.icons.map((n) => (
                <button key={n} aria-label={n} className="flex w-6 justify-center"><Icon name={n} /></button>
              ))}
              <button className="ml-px pt-px">{row.label}</button>
            </div>
          ))}
        </div>
      </Panel>
      <Panel title="块" className="w-[134px]">
        <BigTool icon="insert" lines={['插入']} className="w-[42px]" />
        <div className="ml-1">
          <Tool icon="blockCreate" label="创建" />
          <Tool icon="blockEdit" label="编辑" />
          <Tool icon="blockAttr" label="编辑属性" caret />
        </div>
      </Panel>
      <Panel title="特性" className="w-[244px]" launcher>
        <BigTool icon="matchProps" lines={['特性', '匹配']} className="w-[42px]" />
        <div className="w-[19px]">
          <Tool icon="wheel" />
          <Tool icon="lineweight" />
          <Tool icon="linetype" />
        </div>
        <div className="flex w-[180px] flex-col gap-[2px] pt-px">
          <PropertyCombo label="对象颜色" swatch />
          <PropertyCombo label="线宽" />
          <PropertyCombo label="线型" />
        </div>
      </Panel>
      <Panel title="组" className="w-[68px]">
        <BigTool icon="group" lines={['组']} className="w-[41px]" />
        <div className="w-6">
          <button aria-label="解除编组" className="flex h-6 w-6 items-center justify-center"><Icon name="ungroup" /></button>
          <button aria-label="组编辑" className="flex h-6 w-6 items-center justify-center"><Icon name="groupEdit" /></button>
          <button aria-label="启用组选择" className="my-px flex h-[22px] w-6 items-center justify-center border border-[#1560c0] bg-[#b5d3f3]">
            <Icon name="groupSelect" />
          </button>
        </div>
      </Panel>
      <Panel title="实用工具" className="w-[76px]">
        <BigTool icon="measure" lines={['测量']} caret className="w-[50px]" />
        <div className="ml-[3px]">
          <Tool icon="quickSelect" />
          <Tool icon="idPoint" />
          <Tool icon="calc" />
        </div>
      </Panel>
      <Panel title="剪贴板" className="w-[76px]" caret={false}>
        <BigTool icon="paste" lines={['粘贴']} caret className="w-[50px]" />
        <div className="ml-[3px]">
          <Tool icon="cut" />
          <Tool icon="copyClip" />
        </div>
      </Panel>
      <Panel title="视图" className="w-[60px]" launcher>
        <BigTool icon="base" lines={['基点']} caret className="w-[60px]" />
      </Panel>
    </div>
  );
}

function FileTabs() {
  return (
    <div className="flex h-[29px] items-end border-b-4 border-[#f0f0f0] bg-[#b2b2b2] pl-[14px] text-black">
      <div className="relative flex h-[22px] w-[136px] items-center pl-[18px]">
        <svg aria-hidden="true" viewBox="0 0 136 22" preserveAspectRatio="none" className="absolute inset-0 h-full w-full">
          <path d="M0 22c8-1 5-22 15-22h108c9 0 6 22 13 22z" fill="#f4f4f4" />
        </svg>
        <a href="#drawing1" className="relative text-[12px]">Drawing1*</a>
        <button aria-label="关闭 Drawing1" className="relative ml-auto mr-[18px]">
          <svg viewBox="0 0 8 8" className="h-2 w-2" stroke="#9a9a9a" strokeWidth="1.8"><path d="M0 0l8 8M8 0L0 8" /></svg>
        </button>
      </div>
      <button aria-label="新图形" className="mb-[3px] ml-[2px] flex h-[15px] w-[22px] items-center justify-center rounded-bl-xl rounded-tr-xl bg-[#e4e4e4]">
        <svg viewBox="0 0 8 8" className="h-2 w-2" stroke="#444" strokeWidth="2"><path d="M4 0v8M0 4h8" /></svg>
      </button>
    </div>
  );
}

// distance between neighbouring grid lines; every fifth one is heavier
const STEP_X = 40.372;
const STEP_Y = 40.365;

function Grid() {
  const cols = Array.from({ length: 96 }, (_, i) => i);
  const rows = Array.from({ length: 54 }, (_, i) => i);
  return (
    <g shapeRendering="crispEdges">
      {rows.map((i) => {
        const y = Math.floor(20.15 + i * STEP_Y) + 0.5;
        return (
          <g key={i}>
            <path d={`M0 ${y}h4000`} stroke="#000" strokeOpacity=".08" strokeWidth="3" />
            <path d={`M0 ${y}h4000`} stroke={i % 5 === 0 ? '#555' : '#999'} />
          </g>
        );
      })}
      {cols.map((i) => {
        const x = Math.floor(30.2 + i * STEP_X) + 0.5;
        return (
          <g key={i}>
            <path d={`M${x} 0v2200`} stroke="#000" strokeOpacity=".08" strokeWidth="3" />
            <path d={`M${x} 0v2200`} stroke={i % 5 === 3 ? '#555' : '#999'} />
          </g>
        );
      })}
    </g>
  );
}

function Drawing() {
  return (
    <svg aria-hidden="true" className="absolute inset-0 h-full w-full">
      <Grid />
      <g transform="translate(0 -194)" fill="none" stroke="#000">
        <rect x="371.5" y="385.5" width="726" height="563" rx="2" stroke="#ff1d12" strokeWidth="3" />
        <rect x="484.5" y="450.5" width="524" height="314" strokeWidth="1.2" />
        <path d="M520.5 531.5h83v167h-83z" stroke="#ddd" strokeWidth="3" />
        <path d="M520.5 531.5h83v167h-83z" strokeDasharray="3 2" />
        <path d="M495.5 569l77-31.5 62 154.5-77 31.5z" />
        <g fill="#0080ff" stroke="#2b3a4d">
          <path d="M513.5 524.5h14v14h-14zM596.5 524.5h14v14h-14zM513.5 691.5h14v14h-14zM596.5 691.5h14v14h-14z" />
          <path d="M551.5 528.5h21v6h-21zM551.5 695.5h21v6h-21zM517.5 604.5h6v21h-6z" />
        </g>
        <path d="M600 604h7v22h-7z" fill="#b00000" stroke="none" />
        <path d="M600 606l7 18" stroke="#35d6e6" />
        <path d="M601 615h5M603.5 612v5" stroke="#8a4fd0" />
        <path d="M603 705l9-4" stroke="#e08a2c" />
        <path d="M607 614l55-22" stroke="#e8b422" strokeWidth="1.4" strokeDasharray="14 6" />
        <path d="M614 591.5h96M662.5 544v96" />
        <path d="M561.5 611v8M558 615h8M559 612l6 6M565 612l-6 6" strokeWidth=".8" />
        <g stroke="#222">
          <circle cx="682" cy="573.5" r="7.5" fill="#fff" strokeWidth="1.3" />
          <path d="M678.5 571a4.200 4.200 0 1 1 0 5M678.5 568v4h4" strokeWidth="1.3" />
          <path d="M672 573l4-3v6z" fill="#fff" />
        </g>
        {/* UCS icon */}
        <path d="M21.5 979v49.5H71M17.5 1023.5h9v9h-9z" strokeWidth="1.2" />
        <path d="M23 961l6.5 7 6.5-7M29.5 968v6M76 1014l13 13M89 1014l-13 13" />
      </g>
    </svg>
  );
}

function ViewCube() {
  const face = 'absolute text-[19px] font-bold leading-5 text-[#c6c6c6]';
  return (
    <div className="absolute right-[13px] top-[15px] h-44 w-[136px]">
      <div className="absolute left-[7px] top-[6px] h-[122px] w-[122px] rounded-full border-[11px] border-[#eeeeee]/30" />
      <span className={clsx(face, 'left-[59px] top-px')}>北</span>
      <span className={clsx(face, 'left-[2px] top-[58px]')}>西</span>
      <span className={clsx(face, 'right-[2px] top-[58px]')}>东</span>
      <span className={clsx(face, 'left-[59px] top-[115px]')}>南</span>
      <button aria-label="上" className="absolute left-[41px] top-[41px] flex h-[52px] w-[52px] items-center justify-center border border-[#a2a2a2] bg-[#ececec]/85">
        <svg viewBox="0 0 32 32" className="h-8 w-8 bg-[#e0e2e6]">
          <path d="M14 4h3v21h-3z" fill="#a4a6aa" />
          <path d="M17 12.500h11M0 25.500h31" stroke="#b4b6ba" />
          <path d="M23 12.500l3-2 3 2zM26 25.500l3-2 2 2z" fill="#a4a6aa" />
        </svg>
      </button>
      <button className="absolute left-[44px] top-[155px] flex h-4 w-[46px] items-center justify-between rounded bg-[#e9e9f5]/80 px-[3px] font-['Liberation_Sans',sans-serif] text-[10px] text-[#999]">
        WCS
        <svg viewBox="0 0 10 6" className="h-[5px] w-[9px]" fill="none" stroke="#b0b0b8"><path d="M.5.5h9L5 5z" /></svg>
      </button>
    </div>
  );
}

function NavBar() {
  return (
    <div className="absolute right-[2px] top-[210px] h-[215px] w-9 rounded-md border-2 border-[#c0c0c0]/90 bg-[#f1f1f1]/70">
      <svg aria-hidden="true" viewBox="0 0 32 211" className="h-full w-full" fill="none" stroke="#d2d5d8">
        <circle cx="26" cy="5" r="3" />
        <path d="M24 3l4 4M28 3l-4 4" />
        <path d="M16 19h10v11a10.5 10.5 0 1 1-10-11z" />
        <circle cx="16" cy="30" r="6" />
        <path d="M3 56.5h26M3 164.5h26" stroke="#c8c8c8" />
        <path d="M10 83c-2-5-5-8-6-11 3-1 4 2 6 3l-1-11c2-1 3 1 4 8V61c2-1 3 1 3 10l2-10c2 0 2 2 1 11l3-8c2 0 2 2 0 9-1 6-2 8-4 10z" />
        <path d="M5 91l13 14M18 91L5 105M5 95v-4h4M14 91h4v4M5 101v4h4" />
        <circle cx="20" cy="105" r="5" />
        <path d="M24 109l5 5" strokeWidth="2.5" />
        <path d="M16 128l-4 4h2v16h4v-16h2zM14 137c-12 0-12 8-2 8M18 137c13 0 12 9 1 8M9 142l4 3-4 3" />
        <path d="M5 169h6v6H5zM13 169h6v6h-6zM21 169h6v6h-6zM5 178h17v13H5z" />
        <path d="M10 181v7l6-3.5zM14 50h5l-2.5 3zM14 120h5l-2.5 3zM14 158h5l-2.5 3z" fill="#c2c5c9" stroke="none" />
        <circle cx="26" cy="206" r="3" />
        <path d="M24 206h4" />
      </svg>
    </div>
  );
}

const OPTIONS = [
  ['基点', 'B'], ['复制', 'C'], ['放弃', 'U'], ['参照', 'R'], ['退出', 'X'],
];

function CommandLine() {
  return (
    <div className="absolute bottom-0 left-[495px] right-[489px] flex h-[27px] items-center overflow-hidden rounded-[3px] border border-[#999] bg-white/70 font-['Liberation_Mono','Noto_Sans_CJK_SC',monospace] text-[13px] text-[#444]">
      <div className="flex h-full w-[53px] shrink-0 items-center bg-[#777]/90 pl-1 text-white">
        <svg aria-hidden="true" viewBox="0 0 6 18" className="h-[18px] w-[6px]">
          <path d="M1 0v18M3 0v18M5 0v18" stroke="#ccc" strokeDasharray="1 1" />
        </svg>
        <button aria-label="关闭命令行" className="ml-1">
          <svg viewBox="0 0 10 10" className="h-[10px] w-[10px]" stroke="#fff" strokeWidth="2"><path d="M1 1l8 8M9 1L1 9" /></svg>
        </button>
        <button aria-label="自定义" className="ml-[10px]">
          <svg viewBox="0 0 16 16" className="h-[14px] w-[14px]">
            <path d="M6 1a4.500 4.500 0 0 0-5 5 4 4 0 0 0 5 3l6 6c2 1 3-1 2-2L8.500 7A4.500 4.500 0 0 0 8 2L5.500 4.800 3.500 3z" fill="#fff" />
          </svg>
        </button>
      </div>
      <button aria-label="近期使用的命令" className="ml-[5px] flex items-center gap-1 text-[#999]">
        <svg viewBox="0 0 15 14" className="h-[14px] w-[15px]" fill="none" stroke="#888">
          <path d="M.5.5h14v13H.5z" fill="#eef0f4" stroke="#b9bdc6" />
          <path d="M3 4l3 3-3 3M7 10.5h5" />
        </svg>
        <Caret />
      </button>
      <span className="ml-[2px] whitespace-nowrap">指定旋转角度或</span>
      <span className="ml-[6px]">[</span>
      <span className="flex gap-1">
        {OPTIONS.map(([name, key]) => (
          <button key={key} className="h-[17px] rounded bg-[#dadada] leading-[17px] whitespace-nowrap">
            {name}(<span className="text-[#3c3cf0]">{key}</span>)
          </button>
        ))}
      </span>
      <span className="whitespace-nowrap">]:</span>
      <input aria-label="命令" className="min-w-0 flex-1 bg-transparent outline-none" />
      <button aria-label="展开历史" className="mr-1"><Caret up big /></button>
    </div>
  );
}

function Canvas() {
  return (
    <main className="flex min-h-0 flex-1 bg-white">
      <div className="relative flex-1 overflow-hidden">
        <Drawing />
        <div className="absolute left-[3px] top-[6px] text-black">[−][俯视][二维线框]</div>
        <label htmlFor="angle" className="absolute left-[678px] top-[414px] flex h-[25px] w-[122px] items-center border border-black bg-[#999] pl-[3px] text-black">
          <span className="mb-1 flex-1">指定旋转角度或</span>
          <svg viewBox="0 0 11 11" className="mr-[3px] mt-1 h-[11px] w-[11px]">
            <path d="M0 0h11v11H0z" fill="#2222bb" />
            <path d="M0 0h9.5v9.5H0z" fill="#eee" />
            <path d="M5 1.5v5M2.5 4h5M2.5 8h5" stroke="#222" />
          </svg>
        </label>
        <div className="absolute left-[803px] top-[414px] flex h-[22px] w-[29px] items-center border border-[#444] bg-white pl-[3px] text-black">
          <input id="angle" defaultValue="30" className="w-[14px] bg-transparent outline-none" />
          <span className="h-[17px] w-px bg-black" />
        </div>
        <p className="absolute left-[590px] top-[627px] whitespace-nowrap text-[28px] leading-8 text-[#ff1d12]">选择夹点按2次Enter键</p>
        <ViewCube />
        <NavBar />
        <CommandLine />
      </div>
      <div className="relative w-2 border-r border-black bg-[#b9d0eb]">
        <div className="absolute inset-y-0 right-0 w-px bg-[#22c6f3]" />
        <div className="absolute -left-[2px] top-[52px] flex h-[57px] w-2 flex-col justify-end gap-px rounded-full bg-[#4b555e] px-px pb-[3px]">
          {Array.from({ length: 9 }, (_, i) => <span key={i} className="h-[2px] bg-[#2fd45c]" />)}
        </div>
      </div>
    </main>
  );
}

type StatusItem = { icon?: string; text?: string; w: string; sep?: boolean };

const STATUS: StatusItem[] = [
  { icon: 'grid', w: 'w-[22px]', sep: true },
  { icon: 'snap', w: 'w-6' },
  { w: 'w-4' },
  { icon: 'infer', w: 'w-7', sep: true },
  { icon: 'dynInput', w: 'w-[26px]', sep: true },
  { icon: 'ortho', w: 'w-6', sep: true },
  { icon: 'polar', w: 'w-[22px]' },
  { w: 'w-4' },
  { icon: 'iso', w: 'w-6', sep: true },
  { w: 'w-4' },
  { icon: 'otrack', w: 'w-6', sep: true },
  { icon: 'osnap', w: 'w-6' },
  { w: 'w-4' },
  { icon: 'lwt', w: 'w-6', sep: true },
  { icon: 'transparency', w: 'w-[26px]', sep: true },
  { icon: 'cycling', w: 'w-6', sep: true },
  { icon: 'osnap3d', w: 'w-[26px]', sep: true },
  { w: 'w-4' },
  { icon: 'ducs', w: 'w-6', sep: true },
  { icon: 'cube', w: 'w-6' },
  { w: 'w-4' },
  { icon: 'gizmo', w: 'w-6' },
  { w: 'w-4' },
  { icon: 'annoVis', w: 'w-[26px]', sep: true },
  { icon: 'annoAuto', w: 'w-6' },
  { icon: 'anno', w: 'w-6' },
  { text: '1:1', w: 'w-6' },
  { w: 'w-4' },
  { icon: 'gear', w: 'w-6', sep: true },
  { w: 'w-4' },
  { icon: 'plus', w: 'w-6', sep: true },
  { icon: 'ruler', w: 'w-[26px]', sep: true },
  { text: '小数', w: 'w-[58px]' },
  { w: 'w-4' },
  { icon: 'quickProps', w: 'w-[26px]', sep: true },
  { icon: 'lockUi', w: 'w-[26px]', sep: true },
  { w: 'w-4' },
  { icon: 'isolate', w: 'w-6', sep: true },
  { icon: 'hardware', w: 'w-7', sep: true },
  { icon: 'clean', w: 'w-[26px]', sep: true },
  { icon: 'menu', w: 'w-[26px]' },
];

function LayoutTab({ label, active }: { label: string; active?: boolean }) {
  return (
    <a href="#layout" className={clsx('relative -mr-[6px] flex h-[18px] w-[58px] items-center justify-center', active ? 'z-10 font-bold text-black' : 'text-[#666]')}>
      <svg aria-hidden="true" viewBox="0 0 58 18" className="absolute inset-0 h-full w-full">
        <path d="M0 0h58c-7 1-5 17-12 17H13C6 17 7 1 0 0z" fill={active ? '#f4f4f4' : '#d6d6d6'} />
      </svg>
      <span className="relative">{label}</span>
    </a>
  );
}

function StatusBar() {
  return (
    <footer className="flex h-7 shrink-0 border-t border-[#999] bg-[#b2b2b2]">
      <nav className="flex pl-[6px]">
        <LayoutTab label="模型" active />
        <LayoutTab label="布局1" />
        <LayoutTab label="布局2" />
        <button aria-label="新建布局" className="ml-[10px] flex h-4 w-[22px] items-center justify-center rounded-br-xl rounded-tl-xl bg-[#e4e4e4]">
          <svg viewBox="0 0 8 8" className="h-2 w-2" stroke="#444" strokeWidth="2"><path d="M4 0v8M0 4h8" /></svg>
        </button>
      </nav>
      <div className="ml-auto flex bg-[#e5e5e5] pb-px text-black">
        <button className="w-[152px] pr-[6px] text-right">15.7201&lt;22, 0.0000</button>
        <button className="w-[34px] border-l-2 border-[#efefef] font-medium">模型</button>
        {STATUS.map((s, i) => (
          <button
            key={i}
            aria-label={s.icon ?? s.text ?? '选项'}
            className={clsx('flex items-center', s.w, s.sep && 'border-l border-[#f2f2f2]', s.text === '小数' ? 'pl-[6px] font-medium' : 'justify-center')}
          >
            {s.icon ? <Icon name={s.icon} /> : s.text ?? <Caret big />}
          </button>
        ))}
      </div>
    </footer>
  );
}

export default function App() {
  return (
    <div className="relative flex h-screen flex-col overflow-hidden bg-[#b2b2b2] font-['Open_Sans','Noto_Sans_CJK_SC',sans-serif] text-[12px] leading-4">
      <header className="relative shrink-0">
        <TitleBar />
        <MenuBar />
        <button aria-label="应用程序菜单" className="absolute left-0 top-0 flex h-[41px] w-[41px] items-center justify-center gap-[3px] border border-black bg-linear-to-b from-[#a9a9a9] to-[#6d6d6d] text-[#222]">
          <svg viewBox="0 0 24 26" className="h-[26px] w-6">
            <path d="M11 0h3l10 25h-5l-2-4c-3-2-7-2-9 0l-3 4H0z" fill="#c4161c" />
            <path d="M11 0h3l3 10-9 6-8 9z" fill="#e2383c" />
            <path d="M17 10l7 15h-5l-2-4c-2-1-6-2-9 0l9-5z" fill="#9c0d12" />
          </svg>
          <Caret />
        </button>
      </header>
      <RibbonTabs />
      <Ribbon />
      <FileTabs />
      <Canvas />
      <StatusBar />
      <div className="flex h-[2px] shrink-0 border-t border-black">
        <div className="w-[246px] bg-[#84909c]" />
        <div className="w-[792px] bg-white" />
        <div className="flex-1 bg-[#84909c]" />
      </div>
      <div className="pointer-events-none absolute bottom-[19px] right-[5px] text-[37px] font-black leading-10 text-[#7d7d7d]">最需教育</div>
    </div>
  );
}
